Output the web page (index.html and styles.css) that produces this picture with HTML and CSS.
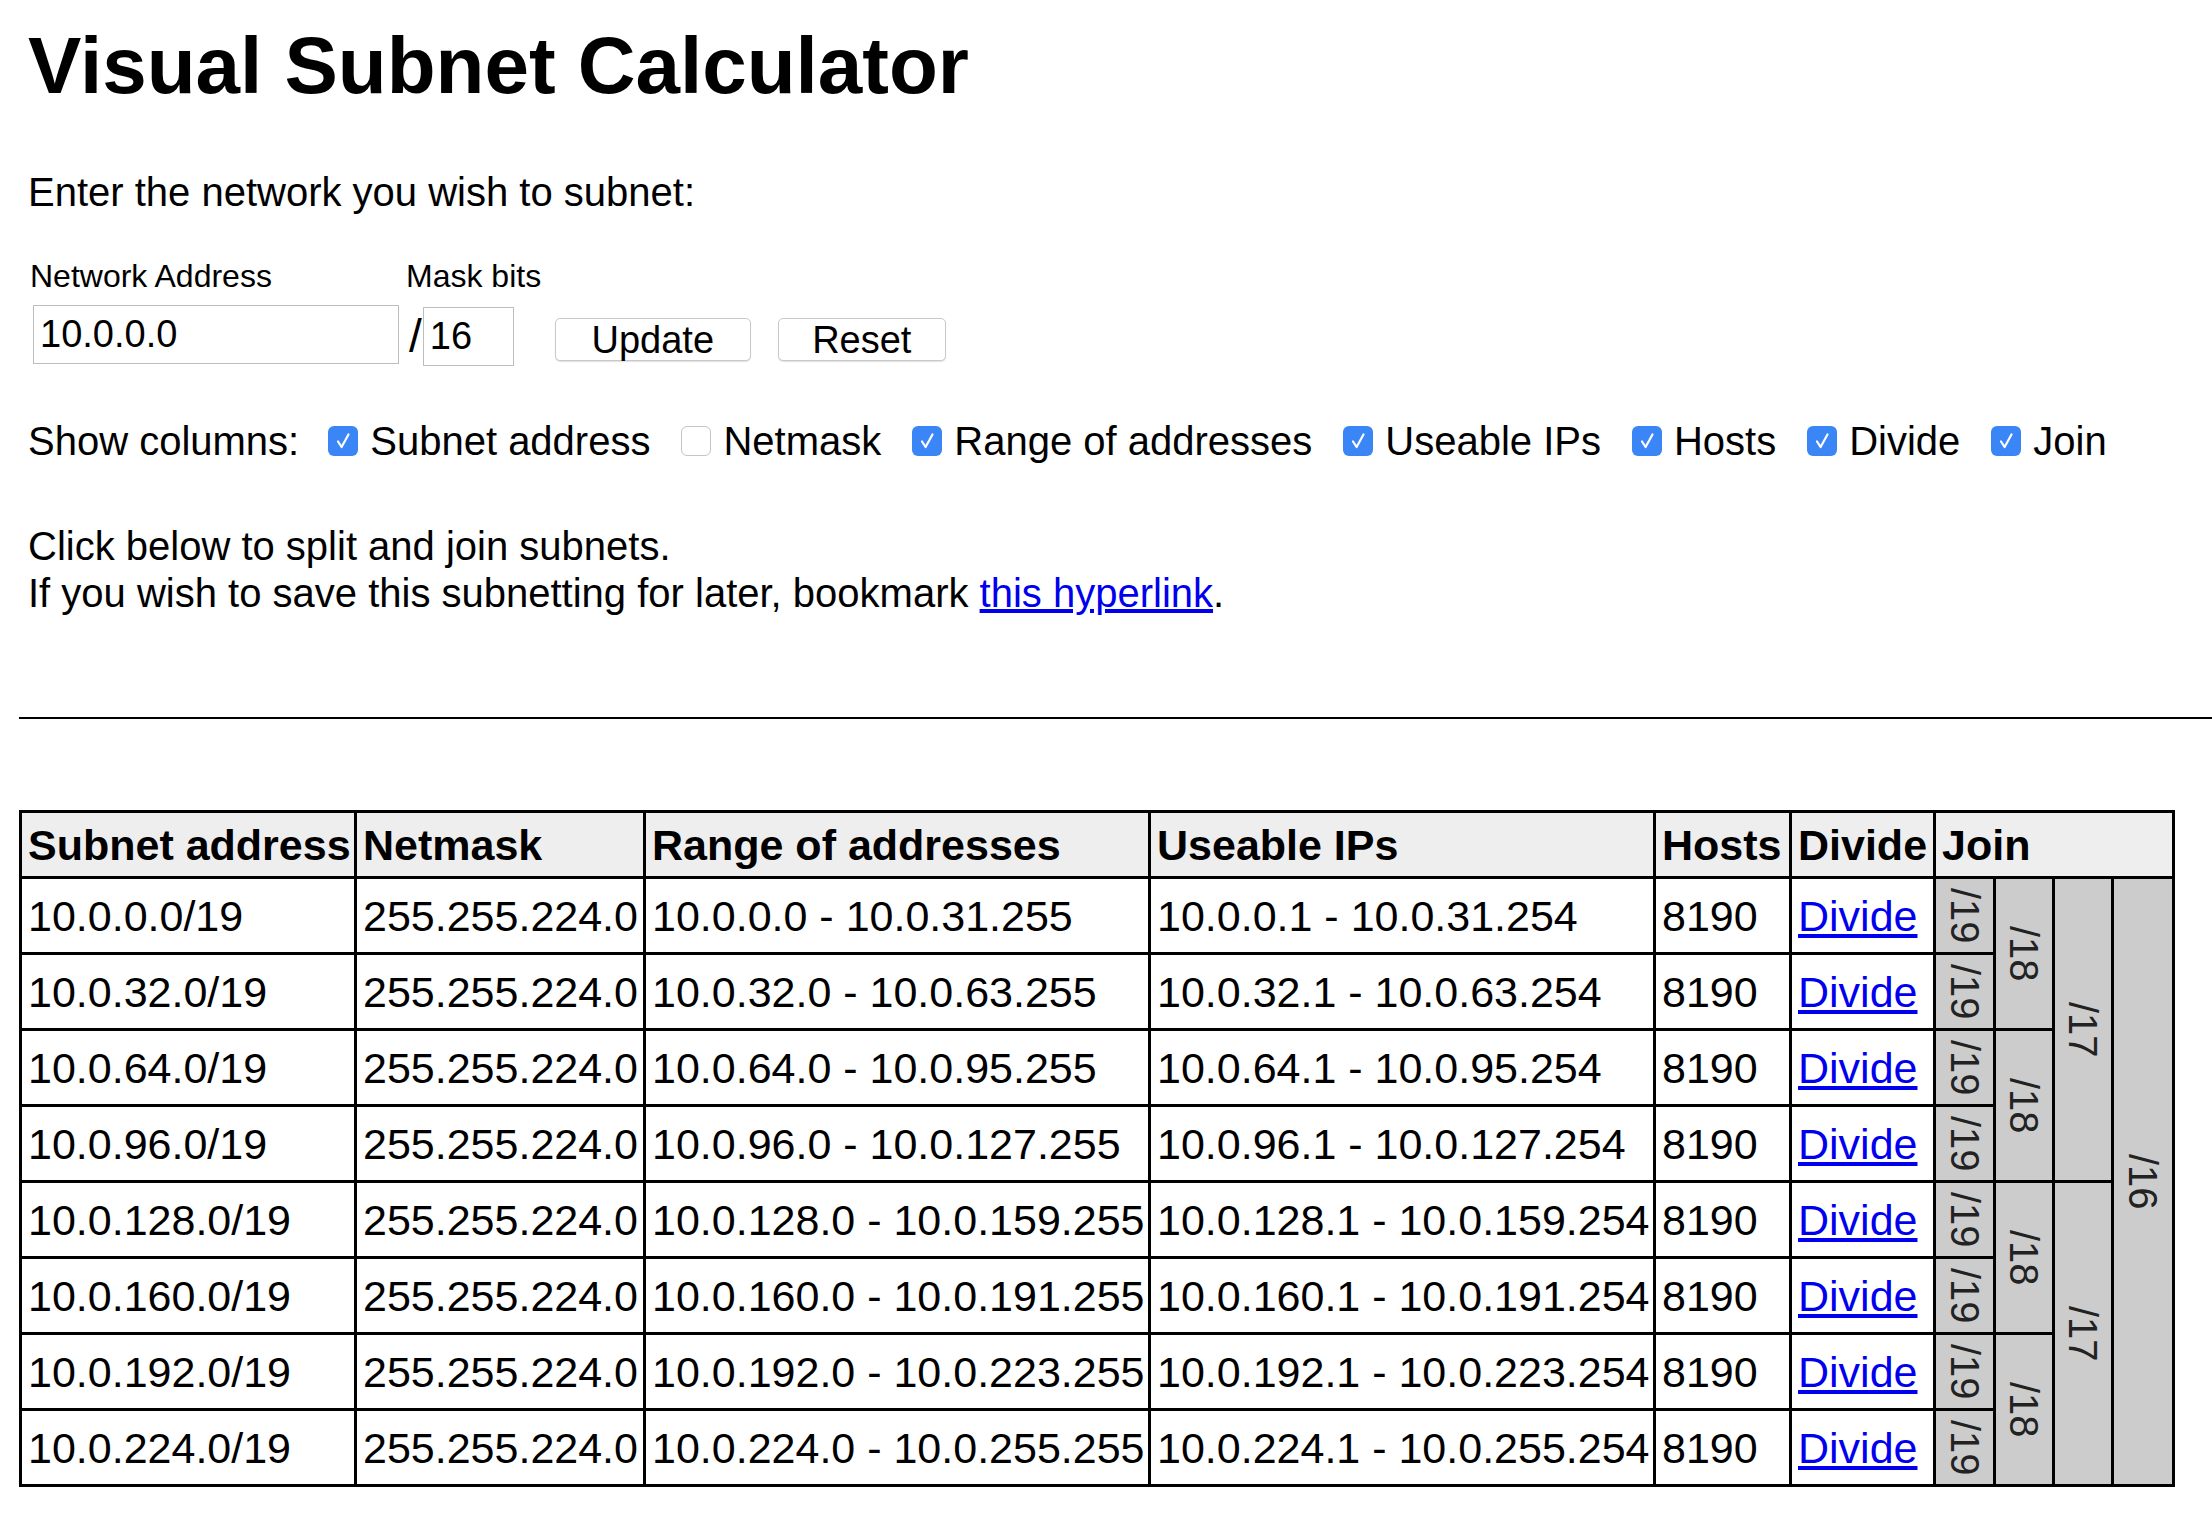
FILE: index.html
```html
<!DOCTYPE html>
<html lang="en">
<head>
<meta charset="utf-8">
<title>Visual Subnet Calculator</title>
<link rel="stylesheet" href="styles.css">
</head>
<body>
<div class="page">
  <div class="intro">
    <h1 class="title">Visual Subnet Calculator</h1>
    <p class="lead">Enter the network you wish to subnet:</p>
    <form class="netform">
      <div class="netform-labels">
        <span class="label-net">Network Address</span>
        <span class="label-mask">Mask bits</span>
      </div>
      <div class="netform-row">
        <input class="net-input" type="text" value="10.0.0.0">
        <span class="slash">/</span>
        <input class="mask-input" type="text" value="16">
        <button class="btn btn-update" type="button">Update</button>
        <button class="btn btn-reset" type="button">Reset</button>
      </div>
    </form>
    <div class="columns">
      <span class="columns-title">Show columns:</span>
      <label class="opt opt-first"><span class="cb on"><svg viewBox="0 0 30 30" width="30" height="30"><path d="M10 15.5 L13.6 21 L20.5 8.5" fill="none" stroke="#fff" stroke-width="2.2" stroke-linecap="round" stroke-linejoin="round"/></svg></span>Subnet address</label>
      <label class="opt"><span class="cb off"></span>Netmask</label>
      <label class="opt"><span class="cb on"><svg viewBox="0 0 30 30" width="30" height="30"><path d="M10 15.5 L13.6 21 L20.5 8.5" fill="none" stroke="#fff" stroke-width="2.2" stroke-linecap="round" stroke-linejoin="round"/></svg></span>Range of addresses</label>
      <label class="opt"><span class="cb on"><svg viewBox="0 0 30 30" width="30" height="30"><path d="M10 15.5 L13.6 21 L20.5 8.5" fill="none" stroke="#fff" stroke-width="2.2" stroke-linecap="round" stroke-linejoin="round"/></svg></span>Useable IPs</label>
      <label class="opt"><span class="cb on"><svg viewBox="0 0 30 30" width="30" height="30"><path d="M10 15.5 L13.6 21 L20.5 8.5" fill="none" stroke="#fff" stroke-width="2.2" stroke-linecap="round" stroke-linejoin="round"/></svg></span>Hosts</label>
      <label class="opt"><span class="cb on"><svg viewBox="0 0 30 30" width="30" height="30"><path d="M10 15.5 L13.6 21 L20.5 8.5" fill="none" stroke="#fff" stroke-width="2.2" stroke-linecap="round" stroke-linejoin="round"/></svg></span>Divide</label>
      <label class="opt"><span class="cb on"><svg viewBox="0 0 30 30" width="30" height="30"><path d="M10 15.5 L13.6 21 L20.5 8.5" fill="none" stroke="#fff" stroke-width="2.2" stroke-linecap="round" stroke-linejoin="round"/></svg></span>Join</label>
    </div>
    <p class="note">Click below to split and join subnets.<br>If you wish to save this subnetting for later, bookmark <a class="link" href="#">this hyperlink</a>.</p>
  </div>
  <div class="rule"></div>
  <div class="calc">
    <div class="th">Subnet address</div>
    <div class="th">Netmask</div>
    <div class="th">Range of addresses</div>
    <div class="th">Useable IPs</div>
    <div class="th">Hosts</div>
    <div class="th">Divide</div>
    <div class="th join-head">Join</div>

    <div class="td">10.0.0.0/19</div>
    <div class="td">255.255.224.0</div>
    <div class="td">10.0.0.0 - 10.0.31.255</div>
    <div class="td">10.0.0.1 - 10.0.31.254</div>
    <div class="td">8190</div>
    <div class="td"><a class="link" href="#">Divide</a></div>
    <div class="j"><span>/19</span></div>
    <div class="j j18"><span>/18</span></div>
    <div class="j j17"><span>/17</span></div>
    <div class="j j16"><span>/16</span></div>

    <div class="td">10.0.32.0/19</div>
    <div class="td">255.255.224.0</div>
    <div class="td">10.0.32.0 - 10.0.63.255</div>
    <div class="td">10.0.32.1 - 10.0.63.254</div>
    <div class="td">8190</div>
    <div class="td"><a class="link" href="#">Divide</a></div>
    <div class="j"><span>/19</span></div>

    <div class="td">10.0.64.0/19</div>
    <div class="td">255.255.224.0</div>
    <div class="td">10.0.64.0 - 10.0.95.255</div>
    <div class="td">10.0.64.1 - 10.0.95.254</div>
    <div class="td">8190</div>
    <div class="td"><a class="link" href="#">Divide</a></div>
    <div class="j"><span>/19</span></div>
    <div class="j j18"><span>/18</span></div>

    <div class="td">10.0.96.0/19</div>
    <div class="td">255.255.224.0</div>
    <div class="td">10.0.96.0 - 10.0.127.255</div>
    <div class="td">10.0.96.1 - 10.0.127.254</div>
    <div class="td">8190</div>
    <div class="td"><a class="link" href="#">Divide</a></div>
    <div class="j"><span>/19</span></div>

    <div class="td">10.0.128.0/19</div>
    <div class="td">255.255.224.0</div>
    <div class="td">10.0.128.0 - 10.0.159.255</div>
    <div class="td">10.0.128.1 - 10.0.159.254</div>
    <div class="td">8190</div>
    <div class="td"><a class="link" href="#">Divide</a></div>
    <div class="j"><span>/19</span></div>
    <div class="j j18"><span>/18</span></div>
    <div class="j j17"><span>/17</span></div>

    <div class="td">10.0.160.0/19</div>
    <div class="td">255.255.224.0</div>
    <div class="td">10.0.160.0 - 10.0.191.255</div>
    <div class="td">10.0.160.1 - 10.0.191.254</div>
    <div class="td">8190</div>
    <div class="td"><a class="link" href="#">Divide</a></div>
    <div class="j"><span>/19</span></div>

    <div class="td">10.0.192.0/19</div>
    <div class="td">255.255.224.0</div>
    <div class="td">10.0.192.0 - 10.0.223.255</div>
    <div class="td">10.0.192.1 - 10.0.223.254</div>
    <div class="td">8190</div>
    <div class="td"><a class="link" href="#">Divide</a></div>
    <div class="j"><span>/19</span></div>
    <div class="j j18"><span>/18</span></div>

    <div class="td">10.0.224.0/19</div>
    <div class="td">255.255.224.0</div>
    <div class="td">10.0.224.0 - 10.0.255.255</div>
    <div class="td">10.0.224.1 - 10.0.255.254</div>
    <div class="td">8190</div>
    <div class="td"><a class="link" href="#">Divide</a></div>
    <div class="j"><span>/19</span></div>
  </div>
</div>
</body>
</html>
```

FILE: styles.css
```css
* { box-sizing: border-box; }

html, body {
  margin: 0;
  padding: 0;
  background: #fff;
}

body {
  font-family: "Liberation Sans", Arial, Helvetica, sans-serif;
  color: #000;
}

.page {
  padding: 20px 20px 40px 19px;
}

.intro {
  padding-left: 9px;
}

.title {
  margin: 0;
  font-size: 80px;
  line-height: 92px;
  font-weight: bold;
}

.lead {
  margin: 57px 0 0;
  font-size: 40px;
  line-height: 46px;
}

.netform {
  margin: 43px 0 0;
  padding-left: 2px;
}

.netform-labels {
  display: flex;
  font-size: 32px;
  line-height: 37px;
}

.label-net {
  width: 376px;
}

.netform-row {
  display: flex;
  align-items: flex-start;
  margin-top: 10px;
  height: 61px;
}

.net-input,
.mask-input {
  font-family: "Liberation Sans", Arial, sans-serif;
  font-size: 38px;
  color: #000;
  border: 1px solid #bdbdbd;
  border-radius: 0;
  background: #fff;
  outline: none;
}

.net-input {
  margin: 0 0 0 3px;
  width: 366px;
  height: 59px;
  padding: 0 0 0 6px;
}

.slash {
  margin: 8px 0 0 10px;
  font-size: 46px;
  line-height: 46px;
}

.mask-input {
  margin: 2px 0 0 1px;
  width: 91px;
  height: 59px;
  padding: 0 0 0 6px;
}

.btn {
  font-family: "Liberation Sans", Arial, sans-serif;
  font-size: 38px;
  line-height: 1;
  color: #000;
  background: #fff;
  border: 1px solid #c9c9c9;
  border-radius: 5px;
  box-shadow: 0 1px 1px rgba(0, 0, 0, 0.12);
  height: 43px;
  margin-top: 13px;
  padding: 0;
}

.btn-update {
  width: 196px;
  margin-left: 41px;
}

.btn-reset {
  width: 168px;
  margin-left: 27px;
}

.columns {
  display: flex;
  margin-top: 52px;
  font-size: 40px;
  line-height: 46px;
}

.opt {
  display: flex;
  align-items: center;
  margin-left: 31px;
}

.opt-first {
  margin-left: 29px;
}

.cb {
  display: block;
  width: 30px;
  height: 30px;
  margin-right: 12px;
  border-radius: 6px;
}

.cb svg {
  display: block;
}

.cb.on {
  background: #3b86f7;
}

.cb.off {
  background: #fff;
  border: 1.5px solid #c4c4c4;
}

.note {
  margin: 59px 0 0;
  font-size: 40px;
  line-height: 47px;
}

.link {
  color: #0000ee;
  text-decoration: underline;
}

.rule {
  margin: 100px -20px 0 0;
  height: 2px;
  background: #000;
}

.calc {
  display: grid;
  width: max-content;
  margin-top: 91px;
  grid-template-columns: 335px 289px 505px 505px 136px 144px 60px 59px 59px 61px;
  grid-template-rows: 66px repeat(8, 76px);
  border-left: 3px solid #000;
  border-top: 3px solid #000;
  font-size: 43px;
  line-height: 48px;
}

.calc > div {
  border-right: 3px solid #000;
  border-bottom: 3px solid #000;
  white-space: nowrap;
}

.th {
  background: #eee;
  font-weight: bold;
  padding: 8px 0 0 6px;
}

.join-head {
  grid-column: span 4;
}

.td {
  background: #fff;
  padding: 13px 0 0 6px;
}

.j {
  background: #ccc;
  display: flex;
  align-items: center;
  justify-content: center;
}

.j span {
  writing-mode: vertical-rl;
  font-size: 40px;
  line-height: 1;
  color: #222;
}

.j18 { grid-row: span 2; }
.j17 { grid-row: span 4; }
.j16 { grid-row: span 8; }
```
